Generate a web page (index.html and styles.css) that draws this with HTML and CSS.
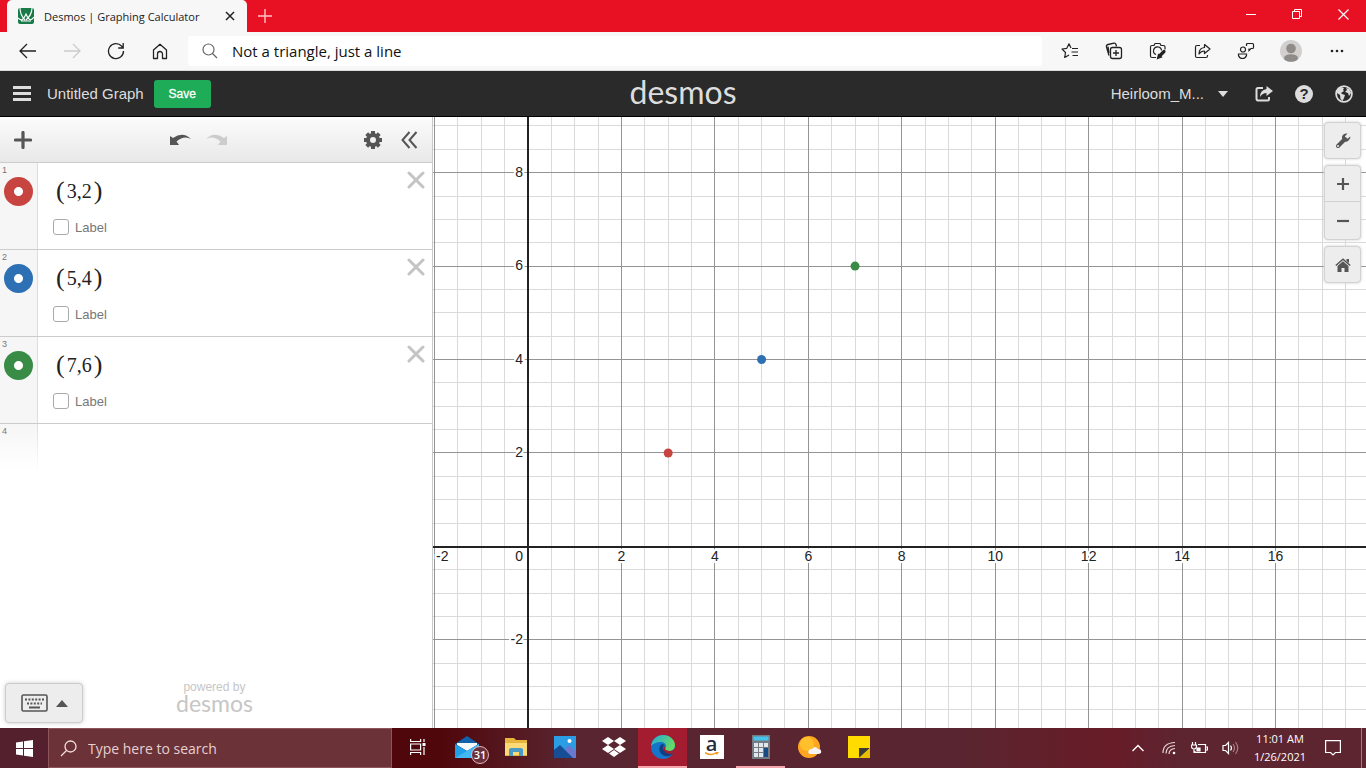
FILE: index.html
```html
<!DOCTYPE html>
<html lang="en">
<head>
<meta charset="utf-8">
<title>Desmos | Graphing Calculator</title>
<link rel="stylesheet" href="styles.css">
</head>
<body>
<header class="titlebar">
  <div class="tab">
    <svg width="16" height="16" viewBox="0 0 16 16"><rect width="16" height="16" rx="2" fill="#187a48"/><path d="M2 0C2 6 4 9 7 12M14 0C14 6 11 9 8 12M0 10c3 3 5 3 8-4 3 7 5 7 8 3M3 13h10" fill="none" stroke="#fff" stroke-width="1.1"/></svg>
    <span class="tab-title">Desmos | Graphing Calculator</span>
    <button class="plain" aria-label="Close tab"><svg width="10" height="10" viewBox="0 0 10 10"><path d="M1 1l8 8M9 1L1 9" stroke="#222" stroke-width="1.5"/></svg></button>
  </div>
  <button class="plain new-tab" aria-label="New tab"><svg width="14" height="14" viewBox="0 0 14 14"><path d="M7 0v14M0 7h14" stroke="#ffc4c8" stroke-width="1.4"/></svg></button>
  <div class="window-buttons">
    <button class="plain" aria-label="Minimize"><svg width="10" height="10" viewBox="0 0 10 10"><path d="M0 5.5h10" stroke="#fff"/></svg></button>
    <button class="plain" aria-label="Restore"><svg width="10" height="10" viewBox="0 0 10 10" fill="none" stroke="#fff"><path d="M.5 2.5h7v7h-7zM2.500 2.500v-2h7v7h-2"/></svg></button>
    <button class="plain" aria-label="Close"><svg width="11" height="11" viewBox="0 0 11 11"><path d="M.5.5l10 10M10.500.5l-10 10" stroke="#fff" stroke-width="1.200"/></svg></button>
  </div>
</header>

<nav class="toolbar" aria-label="Browser">
  <button class="plain" aria-label="Back"><svg width="18" height="16" viewBox="0 0 18 16" fill="none" stroke="#222" stroke-width="1.3"><path d="M17 8H1.500M8 1L1 8l7 7"/></svg></button>
  <button class="plain" aria-label="Forward"><svg width="18" height="16" viewBox="0 0 18 16" fill="none" stroke="#ccc" stroke-width="1.300"><path d="M1 8h15.500M10 1l7 7-7 7"/></svg></button>
  <button class="plain" aria-label="Refresh"><svg width="18" height="18" viewBox="0 0 18 18" fill="none" stroke="#222" stroke-width="1.300"><path d="M16.500 9A7.500 7.500 0 1 1 14.500 4l1.500 1.500M16.200 1v5h-5"/></svg></button>
  <button class="plain" aria-label="Home"><svg width="16" height="17" viewBox="0 0 16 17" fill="none" stroke="#222" stroke-width="1.300" stroke-linejoin="round"><path d="M1.500 7L8 1.200 14.500 7v8.500h-4V11a2.500 2.500 0 0 0-5 0v4.500h-4z"/></svg></button>
  <label class="address">
    <svg width="16" height="16" viewBox="0 0 16 16" fill="none" stroke="#666" stroke-width="1.200"><circle cx="6.500" cy="6.500" r="5.500"/><path d="M10.500 10.500L15 15"/></svg>
    <input type="text" value="Not a triangle, just a line" aria-label="Address and search bar">
  </label>
  <button class="plain" aria-label="Favorites"><svg width="18" height="18" viewBox="0 0 18 18" fill="none" stroke="#222" stroke-width="1.200" stroke-linejoin="round"><path d="M10 6L8 1.800 5.800 6.300 1 7l3.500 3.500-.8 5L8 13M11 6.500h6M10.500 10h6.500M11.500 13.500H17"/></svg></button>
  <button class="plain" aria-label="Collections"><svg width="18" height="18" viewBox="0 0 18 18" fill="none" stroke="#222" stroke-width="1.300"><path d="M4 13.500L1.500 5q-.5-2 1.500-2.500L9 1.200q1.500-.2 2 1.300l.5 2M4 11l-1-6.500"/><rect x="5.500" y="5.500" width="11" height="11" rx="2"/><path d="M11 8v6M8 11h6"/></svg></button>
  <button class="plain" aria-label="Web capture"><svg width="18" height="18" viewBox="0 0 18 18" fill="none" stroke="#222" stroke-width="1.200"><path d="M7 15.500H3q-1.500 0-1.500-1.500V5Q1.500 3.500 3 3.500h2l1-2h5l1 2h2.500q1.500 0 1.500 1.500v2.500M7 12.500a4 4 0 1 1 5.500-4"/><path d="M15 9.500L11 13.500" stroke-width="3.200" stroke-linecap="round"/><path d="M9.500 12.500l-1 4 4-1.500z" fill="#222"/></svg></button>
  <button class="plain" aria-label="Share page"><svg width="17" height="16" viewBox="0 0 17 16" fill="none" stroke="#222" stroke-width="1.200" stroke-linejoin="round"><path d="M6 2.500H3Q1.500 2.500 1.500 4v9q0 1.500 1.500 1.500h9q1.500 0 1.500-1.500v-1"/><path d="M10.500 1.500L16 6l-5.500 4.500V8Q7 8 5 11q0-6 5.500-6.500z"/></svg></button>
  <button class="plain" aria-label="Feedback"><svg width="18" height="18" viewBox="0 0 18 18" fill="none" stroke="#222" stroke-width="1.200"><circle cx="6" cy="7.500" r="2.500"/><path d="M1.500 12h8v1.500q-1 3-4 3t-4-3zM9.500 4V2.500q0-1 1-1h5q1 0 1 1v3q0 1-1 1h-1.500L12 8.500v-2"/></svg></button>
  <button class="plain wide" aria-label="Profile"><svg width="22" height="22" viewBox="0 0 22 22"><circle cx="11" cy="11" r="11" fill="#d2d0ce"/><circle cx="11" cy="8.500" r="4.800" fill="#8f8b88"/><ellipse cx="11" cy="18" rx="7" ry="3.800" fill="#8f8b88"/></svg></button>
  <button class="plain wide" aria-label="Settings and more"><svg width="14" height="4" viewBox="0 0 14 4" fill="#222"><circle cx="2" cy="2" r="1.300"/><circle cx="7" cy="2" r="1.300"/><circle cx="12" cy="2" r="1.300"/></svg></button>
</nav>

<header class="appbar">
  <div class="app-left">
    <button class="plain" aria-label="Open graph menu"><svg width="18" height="15" viewBox="0 0 18 15"><path d="M0 1.500h18M0 7.500h18M0 13.500h18" stroke="#ddd" stroke-width="3"/></svg></button>
    <span class="graph-title">Untitled Graph</span>
    <button class="save">Save</button>
  </div>
  <a class="logo" href="#">desmos</a>
  <div class="app-right">
    <button class="plain account">Heirloom_M...<svg width="10" height="6" viewBox="0 0 10 6"><path d="M0 0h10L5 6z" fill="#ddd"/></svg></button>
    <button class="plain" aria-label="Share graph"><svg width="18" height="16" viewBox="0 0 18 16"><path d="M8 2H3Q1.500 2 1.500 3.500v9Q1.500 14.500 3 14.500h9.500q1.500 0 1.500-1.500v-2" fill="none" stroke="#ddd" stroke-width="2"/><path d="M11.500 0L18 5l-6.500 5V7Q7.500 7 5 11q0-7 6.500-8z" fill="#ddd"/></svg></button>
    <button class="plain help" aria-label="Help">?</button>
    <button class="plain" aria-label="Language"><svg width="18" height="18" viewBox="0 0 18 18"><circle cx="9" cy="9" r="7.900" fill="none" stroke="#ddd" stroke-width="1.800"/><path d="M2 5l4-3 3 1-1 2 1 1-3 2 1 1 3 1-1 3-1.500 3-2-2-.5-4L2 8zM11 3l3 1 2 4-2 3-1-3-3-1 2-2z" fill="#ddd"/></svg></button>
  </div>
</header>

<main class="workspace">
  <section class="panel" aria-label="Expression list">
    <div class="panel-bar">
      <button class="plain add" aria-label="Add item"><svg width="18" height="18" viewBox="0 0 18 18"><path d="M9 1.500v15M1.500 9h15" stroke="#555" stroke-width="3.200" stroke-linecap="round"/></svg></button>
      <div class="history">
        <button class="plain" aria-label="Undo"><svg width="21" height="12" viewBox="0 0 21 12"><path d="M0 2l3 2Q13-3 21 5 14 1 6.500 7.500L9 11H0z" fill="#555"/></svg></button>
        <button class="plain" aria-label="Redo"><svg width="21" height="12" viewBox="0 0 21 12"><path d="M21 2l-3 2Q8-3 0 5q7-4 14.500 2.500L12 11h9z" fill="#ccc"/></svg></button>
      </div>
      <div class="panel-tools">
        <button class="plain" aria-label="Edit list"><svg width="18" height="18" viewBox="-9 -9 18 18"><circle r="5" fill="none" stroke="#555" stroke-width="4"/><path d="M0-9V-5M0 9V5M-9 0h4M9 0H5M-6.300-6.300l3 3M6.300 6.300l-3-3M-6.300 6.300l3-3M6.300-6.300l-3 3" stroke="#555" stroke-width="4"/></svg></button>
        <button class="plain" aria-label="Hide list"><svg width="17" height="18" viewBox="0 0 17 18" fill="none" stroke="#555" stroke-width="2"><path d="M8.500 1L1.500 9l7 8M15.500 1l-7 8 7 8"/></svg></button>
      </div>
    </div>
    <ol class="expressions">
      <li class="row">
        <div class="gutter"><span class="index">1</span><button class="plain marker red" aria-label="Hide point 1"></button></div>
        <div class="body"><div class="math"><span class="paren">(</span>3,2<span class="paren">)</span></div><label class="tick"><input type="checkbox">Label</label></div>
        <button class="plain remove" aria-label="Delete 1"><svg width="18" height="18" viewBox="0 0 18 18"><path d="M2 2l14 14M16 2L2 16" stroke="#c4c4c4" stroke-width="3" stroke-linecap="round"/></svg></button>
      </li>
      <li class="row">
        <div class="gutter"><span class="index">2</span><button class="plain marker blue" aria-label="Hide point 2"></button></div>
        <div class="body"><div class="math"><span class="paren">(</span>5,4<span class="paren">)</span></div><label class="tick"><input type="checkbox">Label</label></div>
        <button class="plain remove" aria-label="Delete 2"><svg width="18" height="18" viewBox="0 0 18 18"><path d="M2 2l14 14M16 2L2 16" stroke="#c4c4c4" stroke-width="3" stroke-linecap="round"/></svg></button>
      </li>
      <li class="row">
        <div class="gutter"><span class="index">3</span><button class="plain marker green" aria-label="Hide point 3"></button></div>
        <div class="body"><div class="math"><span class="paren">(</span>7,6<span class="paren">)</span></div><label class="tick"><input type="checkbox">Label</label></div>
        <button class="plain remove" aria-label="Delete 3"><svg width="18" height="18" viewBox="0 0 18 18"><path d="M2 2l14 14M16 2L2 16" stroke="#c4c4c4" stroke-width="3" stroke-linecap="round"/></svg></button>
      </li>
      <li class="row next"><div class="gutter"><span class="index">4</span></div></li>
    </ol>
    <div class="panel-foot">
      <button class="keypad" aria-label="Show keypad">
        <svg width="27" height="18" viewBox="0 0 27 18"><rect x="1" y="1" width="25" height="16" rx="1.500" fill="none" stroke="#555" stroke-width="1.600"/><path d="M4 5.500h19M6 9.500h15" stroke="#555" stroke-width="2" stroke-dasharray="2 1.400"/><path d="M8 13.500h11" stroke="#555" stroke-width="2"/></svg>
        <svg width="12" height="7" viewBox="0 0 12 7"><path d="M0 7h12L6 0z" fill="#555"/></svg>
      </button>
      <div class="powered"><span>powered by</span><span class="powered-logo">desmos</span></div>
    </div>
  </section>
  <section class="graph" aria-label="Graph paper">
    <svg class="plot" id="plot"></svg>
    <div class="graph-tools">
      <div class="tool-group"><button aria-label="Graph settings"><svg width="16" height="16" viewBox="0 0 16 16"><path d="M3 13L10 6" stroke="#555" stroke-width="4" stroke-linecap="round"/><path d="M15.300 3.500L12.500 5.800 10.200 5.400 10 3.200 12.500.6Q9 0 7.500 2.500T8.500 7.500t5 0 1.800-4z" fill="#555"/><circle cx="3" cy="13" r="1" fill="#ededed"/></svg></button></div>
      <div class="tool-group"><button aria-label="Zoom in"><svg width="12" height="12" viewBox="0 0 12 12"><path d="M6 0v12M0 6h12" stroke="#555" stroke-width="2.200"/></svg></button><button aria-label="Zoom out"><svg width="12" height="12" viewBox="0 0 12 12"><path d="M0 6h12" stroke="#555" stroke-width="2.200"/></svg></button></div>
      <div class="tool-group"><button aria-label="Default view"><svg width="16" height="14" viewBox="0 0 16 14"><path d="M.8 7.500L8 1.300l7.200 6.200" fill="none" stroke="#555" stroke-width="1.500"/><path d="M11.500 1H14v4l-2.500-2zM2.500 8L8 3.300 13.500 8v6h-4v-4h-3v4h-4z" fill="#555"/></svg></button></div>
    </div>
  </section>
</main>

<footer class="taskbar">
  <button class="plain start" aria-label="Start"><svg width="17" height="17" viewBox="0 0 17 17" fill="#fff"><path d="M0 2.500L7 1.400V8H0zM8 1.200L17 0v8H8zM0 9h7v6.600L0 14.500zM8 9h9v8l-9-1.300z"/></svg></button>
  <label class="search"><svg width="17" height="17" viewBox="0 0 17 17" fill="none" stroke="#f3dede" stroke-width="1.300"><circle cx="10.500" cy="6.500" r="5.500"/><path d="M6.500 10.500L1 16"/></svg><input type="text" placeholder="Type here to search" aria-label="Search"></label>
  <div class="apps">
    <button class="plain" aria-label="Task view"><svg width="16" height="16" viewBox="0 0 16 16" fill="none" stroke="#fff" stroke-width="1.200"><path d="M.6 0v2.500h10V0M.6 5h10v6H.6zM.6 16v-2.500h10V16M14 0v3M14 8v8"/><path d="M14 4v3" stroke-width="3"/></svg></button>
    <button class="plain mail" aria-label="Mail"><svg width="24" height="22" viewBox="0 0 24 22"><path d="M0 8L12 0l12 8-12 7z" fill="#1261ad"/><path d="M2 7h20v2l-10 6L2 9z" fill="#f5f8fb"/><path d="M0 8l12 7 12-7v14H0z" fill="#1fa0e8"/><path d="M0 22L24 8v14z" fill="#43b8f3"/></svg><span class="badge">31</span></button>
    <button class="plain" aria-label="File Explorer"><svg width="22" height="18" viewBox="0 0 22 18"><path d="M0 0h9l2 2h11v16H0z" fill="#e9b43b"/><path d="M0 5h22v12H0z" fill="#fbd977"/><path d="M4 18v-7l2-1h10l2 1v7h-4v-4H8v4z" fill="#4b9bc5"/></svg></button>
    <button class="plain" aria-label="Photos"><svg width="22" height="22" viewBox="0 0 22 22"><path d="M0 0h22v22H0z" fill="#2b9de5"/><path d="M8 16l7-7 7 6v7H8z" fill="#6a78cd"/><path d="M0 14l6-5 13 13H0z" fill="#174d94"/><circle cx="15.500" cy="5" r="2" fill="#fff"/></svg></button>
    <button class="plain" aria-label="Dropbox"><svg width="24" height="20" viewBox="0 0 24 20" fill="#fff"><path d="M6 0l6 4-6 4-6-4zM18 0l6 4-6 4-6-4zM6 8l6 4-6 4-6-4zM18 8l6 4-6 4-6-4zM12 13l5 3.500-5 3.500-5-3.500z"/></svg></button>
    <button class="plain active" aria-label="Microsoft Edge"><svg width="24" height="24" viewBox="0 0 24 24"><defs><linearGradient id="wave" x1="0" y1="0" x2="1" y2=".5"><stop offset="0" stop-color="#23a5e0"/><stop offset="1" stop-color="#66db62"/></linearGradient></defs><circle cx="12" cy="12" r="12" fill="#1575c8"/><path d="M0 11C1 4 6 0 12 0c7 0 12 5 12 10 0 4-3 6-6 6-2 0-4-1-4-2s1-1 1-3-2-4-5-4C5 7 2 9 0 11z" fill="url(#wave)"/><path d="M11 9c-4 2-4 10 3 12 4 1 7-1 8-3-3 1-9 0-10-5 0-2 1-3 2-3z" fill="#103f82"/><path d="M14 13.500c0 2 5 3.500 8.500 1.500l1.500-2v5l-2 .5c-5 1-9-1-9.500-5 0-1 .5-2 1.500-2z" fill="#a31c30"/></svg></button>
    <button class="plain" aria-label="Amazon"><span class="amazon">a<svg width="14" height="4" viewBox="0 0 14 4"><path d="M0 .5q6 4 12 0" fill="none" stroke="#f59a23" stroke-width="1.500"/><path d="M10 0h4l-2 3z" fill="#f59a23"/></svg></span></button>
    <button class="plain running" aria-label="Calculator"><svg width="18" height="24" viewBox="0 0 18 24"><path d="M0 0h18v24H0z" fill="#757b83"/><path d="M1.500 1.500h15v4h-15z" fill="#46c3ed"/><path d="M2 8h4v4H2zM7 8h4v4H7zM12 8h4v4h-4zM2 13h4v4H2zM7 13h4v4H7zM2 18h4v4H2zM7 18h4v4H7z" fill="#e1e7ed"/><path d="M12 13h4v9h-4z" fill="#164b86"/></svg></button>
    <button class="plain" aria-label="Weather"><svg width="24" height="22" viewBox="0 0 24 22"><circle cx="11" cy="11" r="11" fill="#ffa51f"/><circle cx="9" cy="8" r="7" fill="#ffc02c"/><path d="M12 18q-3-1-1-4 1-1 3-1 3-4 6 0 4 0 3 4-1 1-3 1z" fill="#f6f3f4"/></svg></button>
    <button class="plain" aria-label="Sticky Notes"><svg width="22" height="22" viewBox="0 0 22 22"><path d="M0 0h22v22H0z" fill="#ffdb00"/><path d="M11 22V12h11z" fill="#3d3937"/><path d="M22 12v10H11z" fill="#e8bd00"/></svg></button>
  </div>
  <div class="tray">
    <button class="plain" aria-label="Show hidden icons"><svg width="12" height="8" viewBox="0 0 12 8"><path d="M.5 7L6 1.500 11.500 7" fill="none" stroke="#fff" stroke-width="1.400"/></svg></button>
    <button class="plain" aria-label="Network"><svg width="14" height="14" viewBox="0 0 14 14" fill="none" stroke="#e7d3d7" stroke-width="1.200"><path d="M1 12Q1 2 13 1.500M4 12.500Q4 5 13 4.500M7 13q0-5 6-5.500"/><circle cx="12" cy="12" r="1.300" fill="#fff" stroke="none"/></svg></button>
    <button class="plain" aria-label="Battery"><svg width="17" height="13" viewBox="0 0 17 13" fill="none" stroke="#fff" stroke-width="1.200"><path d="M7 2.500h7.500v8H4V9M15 5h1.500v3H15M1.500 0v3M4.500 0v3M.5 3h5v2Q5 7 3 7T.5 5zM3 7v4"/><path d="M6 6h3v3H6z" fill="#fff"/></svg></button>
    <button class="plain" aria-label="Volume"><svg width="17" height="14" viewBox="0 0 17 14" fill="none" stroke="#fff" stroke-width="1.200"><path d="M1 4.500h2.500l3-3v11l-3-3H1zM8.500 4.500q2 2.500 0 5"/><path d="M11 3q3 4 0 8M13.500 1q4.500 6 0 12" stroke="#a87d86"/></svg></button>
    <div class="clock"><span>11:01 AM</span><span>1/26/2021</span></div>
    <button class="plain notify" aria-label="Notifications"><svg width="16" height="16" viewBox="0 0 16 16"><path d="M.6.600h14.800v11.900h-5L8 15l-2.400-2.500h-5z" fill="none" stroke="#fff" stroke-width="1.200"/></svg></button>
    <span class="peek"></span>
  </div>
</footer>
<script src="plot.js"></script>
</body>
</html>
```

FILE: styles.css
```css
* { box-sizing: border-box; }

body {
  margin: 0;
  height: 100vh;
  display: flex;
  flex-direction: column;
  overflow: hidden;
  background: #fff;
  font-family: "Liberation Sans", Arial, sans-serif;
}

svg { display: block; flex: none; }

.plain {
  display: flex;
  align-items: center;
  justify-content: center;
  padding: 0;
  border: 0;
  background: none;
  color: inherit;
  font: inherit;
}

/* Browser window */
.titlebar {
  flex: none;
  display: flex;
  height: 32px;
  padding-left: 7px;
  background: #e81123;
}

.tab {
  display: flex;
  align-items: center;
  width: 240px;
  padding: 0 12px 0 11px;
  border-radius: 5px 5px 0 0;
  background: #f7f7f7;
  color: #222;
  font: 11px "Open Sans", "Noto Sans", sans-serif;
}

.tab-title { flex: 1; margin-left: 10px; white-space: nowrap; }
.new-tab { width: 36px; }
.window-buttons { display: flex; margin-left: auto; padding-bottom: 4px; }
.window-buttons .plain { width: 46px; }

.toolbar {
  flex: none;
  display: flex;
  height: 39px;
  padding: 0 6px;
  border-bottom: 1px solid #dcdcdc;
  background: #f7f7f7;
}

.toolbar .plain { width: 44px; }
.toolbar .wide { width: 46px; }

.address {
  flex: 1;
  display: flex;
  align-items: center;
  gap: 14px;
  margin: 4px 6px;
  padding: 0 14px;
  border-radius: 3px;
  background: #fff;
}

.address input {
  flex: 1;
  min-width: 0;
  padding: 0;
  border: 0;
  outline: 0;
  background: none;
  color: #111;
  font: 15px "Open Sans", "Noto Sans", sans-serif;
}

/* Calculator header */
.appbar {
  flex: none;
  display: grid;
  grid-template-columns: 1fr auto 1fr;
  align-items: center;
  height: 46px;
  padding: 0 13px;
  border-bottom: 1px solid #000;
  background: #2a2a2a;
  color: #ddd;
  font-size: 15px;
}

.app-left, .app-right { display: flex; align-items: center; }
.graph-title { margin: 0 10px 0 16px; }

.save {
  width: 57px;
  height: 28px;
  padding: 0;
  border: 0;
  border-radius: 3px;
  background: #1fac59;
  color: #fff;
  font: 12px "Liberation Sans", Arial, sans-serif;
  -webkit-text-stroke: 0.3px #fff;
}

.logo {
  padding-bottom: 4px;
  color: #ddd;
  font: 32px/40px Lato, sans-serif;
  text-decoration: none;
}

.app-right { justify-content: flex-end; gap: 22px; }
.account { gap: 14px; margin-right: 5px; }

.help {
  width: 18px;
  height: 18px;
  border-radius: 50%;
  background: #ddd;
  color: #2a2a2a;
  font-size: 15px;
  font-weight: bold;
}

/* Expression list */
.workspace { flex: 1; display: flex; min-height: 0; }

.panel {
  flex: none;
  display: flex;
  flex-direction: column;
  width: 433px;
  border-right: 1px solid #c8c8c8;
  background: #fff;
}

.panel-bar {
  flex: none;
  display: grid;
  grid-template-columns: 1fr auto 1fr;
  align-items: center;
  height: 46px;
  padding: 0 14px;
  border-bottom: 1px solid #ccc;
  background: linear-gradient(#fcfcfc, #e8e8e8);
}

.add { justify-self: start; }
.history { display: flex; gap: 15px; margin-right: 36px; }
.panel-tools { display: flex; justify-content: flex-end; gap: 19px; }

.expressions { margin: 0; padding: 0; list-style: none; }

.row {
  display: flex;
  height: 87px;
  border-bottom: 1px solid #ccc;
}

.gutter {
  width: 38px;
  padding: 2px;
  border-right: 1px solid #ddd;
  background: #f6f6f6;
}

.index { display: block; height: 12px; color: #777; font-size: 9px; }

.marker {
  width: 29px;
  height: 29px;
  margin-left: 2px;
  border-radius: 50%;
}

.red { background: radial-gradient(circle, #fff 4px, #c74440 5px); }
.blue { background: radial-gradient(circle, #fff 4px, #2d70b3 5px); }
.green { background: radial-gradient(circle, #fff 4px, #388c46 5px); }

.body { flex: 1; padding: 10px 0 0 15px; }

.math {
  display: flex;
  align-items: center;
  gap: 2px;
  height: 36px;
  padding-left: 3px;
  color: #222;
  font: 20px "Liberation Serif", serif;
}

.paren { font-size: 26px; line-height: 30px; }

.tick {
  display: flex;
  align-items: center;
  gap: 6px;
  margin-top: 10px;
  color: #777;
  font-size: 13px;
}

.tick input {
  appearance: none;
  width: 16px;
  height: 16px;
  margin: 0;
  border: 1px solid #aaa;
  border-radius: 3px;
  background: #fff;
}

.remove { align-self: flex-start; margin: 8px 7px; }

.next { height: 46px; border: 0; }

.next .gutter {
  border-image: linear-gradient(#ddd, #fff) 1;
  background: linear-gradient(#f6f6f6, #fff);
}

.panel-foot {
  display: flex;
  align-items: flex-end;
  gap: 93px;
  margin-top: auto;
  padding: 0 5px 5px;
}

.keypad {
  display: flex;
  align-items: center;
  justify-content: center;
  gap: 8px;
  width: 78px;
  height: 40px;
  padding: 0;
  border: 1px solid #ccc;
  border-radius: 4px;
  background: #ededed;
  box-shadow: 0 0 4px #ccc;
}

.powered {
  display: flex;
  flex-direction: column;
  align-items: center;
  padding-bottom: 11px;
  color: #c6c6c6;
  font-size: 12px;
  line-height: 14px;
}

.powered-logo { font: 23px/18px Lato, sans-serif; }

/* Graph paper */
.graph { position: relative; flex: 1; min-width: 0; }
.plot { width: 100%; height: 100%; }

.grid { fill: none; stroke-width: 1px; shape-rendering: crispEdges; }
.minor { stroke: #dadada; }
.major { stroke: #949494; }
.axis { stroke: #222; stroke-width: 2px; }

.tick-label {
  fill: #222;
  stroke: #fff;
  stroke-width: 4px;
  paint-order: stroke;
  font-size: 14px;
}

.graph-tools {
  position: absolute;
  top: 5px;
  right: 5px;
  display: flex;
  flex-direction: column;
  gap: 6px;
}

.tool-group {
  border: 1px solid #d2d2d2;
  border-radius: 4px;
  background: #ededed;
  box-shadow: 0 0 3px #ccc;
}

.tool-group button {
  display: flex;
  align-items: center;
  justify-content: center;
  width: 35px;
  height: 35px;
  padding: 0;
  border: 0;
  background: none;
}

.tool-group button + button {
  height: 38px;
  border-top: 1px solid #d2d2d2;
}

/* Taskbar */
.taskbar {
  flex: none;
  display: flex;
  height: 40px;
  background: linear-gradient(90deg, #54202e 48px, #50070b 390px, #50070b 440px, #592530 570px, #592530 960px, #681c27 1110px, #5c2530 1180px);
  color: #fff;
  font-family: "Open Sans", "Noto Sans", sans-serif;
}

.start { width: 48px; }

.search {
  display: flex;
  align-items: center;
  gap: 11px;
  width: 344px;
  padding: 0 11px;
  border: 1px solid #8e565c;
  background: #6b3338;
}

.search input {
  flex: 1;
  min-width: 0;
  padding: 0;
  border: 0;
  outline: 0;
  background: none;
  color: #fff;
  font: 14px "Open Sans", "Noto Sans", sans-serif;
}

.search input::placeholder { color: #e6cfd1; opacity: 1; }

.apps { display: flex; padding-left: 1px; }
.apps .plain { width: 49px; border-bottom: 2px solid transparent; }
.apps .active { border-color: #f6a5ad; background: #a31c30; }
.apps .running { border-color: #f6a5ad; }
.mail { position: relative; }

.badge {
  position: absolute;
  right: 2px;
  bottom: 2px;
  width: 18px;
  height: 18px;
  border: 1px solid #e3b7bd;
  border-radius: 50%;
  background: #69303b;
  font-size: 11px;
  font-weight: 600;
  line-height: 16px;
}

.amazon {
  display: flex;
  flex-direction: column;
  align-items: center;
  width: 24px;
  height: 24px;
  background: #fff;
  color: #222f3e;
  font-size: 20px;
  font-weight: 600;
  line-height: 17px;
}

.tray { display: flex; margin-left: auto; }
.tray .plain { width: 31px; }

.clock {
  display: flex;
  flex-direction: column;
  justify-content: center;
  align-items: center;
  width: 68px;
  font-size: 11px;
  line-height: 18px;
}

.tray .notify { width: 38px; }
.peek { width: 5px; margin-left: 9px; border-left: 1px solid #a37982; }
```

FILE: plot.js
```js
const plot = document.getElementById("plot");
const SVG = "http://www.w3.org/2000/svg";
const view = { unit: 46.72, left: 95, top: 429.4 };
const points = [
  { x: 3, y: 2, color: "#c74440" },
  { x: 5, y: 4, color: "#2d70b3" },
  { x: 7, y: 6, color: "#388c46" }
];

function add(name, attributes, text) {
  const node = document.createElementNS(SVG, name);
  for (const key in attributes) node.setAttribute(key, attributes[key]);
  if (text !== undefined) node.textContent = text;
  plot.appendChild(node);
}

const toX = x => view.left + x * view.unit;
const toY = y => view.top - y * view.unit;

function draw() {
  const width = plot.clientWidth;
  const height = plot.clientHeight;
  plot.replaceChildren();
  const right = Math.ceil((width - view.left) / view.unit * 2);
  const left = -Math.ceil(view.left / view.unit * 2);
  const top = Math.ceil(view.top / view.unit * 2);
  const bottom = -Math.ceil((height - view.top) / view.unit * 2);
  const paths = { minor: "", major: "" };

  for (let i = left; i <= right; i++) {
    paths[i % 4 ? "minor" : "major"] += `M${Math.floor(toX(i / 2)) + 0.5} 0V${height}`;
  }
  for (let i = bottom; i <= top; i++) {
    paths[i % 4 ? "minor" : "major"] += `M0 ${Math.floor(toY(i / 2)) + 0.5}H${width}`;
  }
  add("path", { class: "grid minor", d: paths.minor });
  add("path", { class: "grid major", d: paths.major });
  add("path", { class: "grid axis", d: `M${view.left} 0V${height}M0 ${Math.ceil(view.top)}H${width}` });

  const below = view.top + 15;
  for (let x = 2; toX(x) < width - 20; x += 2) {
    add("text", { class: "tick-label", x: toX(x), y: below, "text-anchor": "middle" }, x);
  }
  add("text", { class: "tick-label", x: 3, y: below }, -2);
  add("text", { class: "tick-label", x: view.left - 5, y: below, "text-anchor": "end" }, 0);
  for (let y = -2; toY(y) > 20; y += 2) {
    if (y) add("text", { class: "tick-label", x: view.left - 5, y: toY(y) + 4, "text-anchor": "end" }, y);
  }
  for (const p of points) add("circle", { cx: toX(p.x), cy: toY(p.y), r: 4.5, fill: p.color });
}

draw();
addEventListener("resize", draw);
```
